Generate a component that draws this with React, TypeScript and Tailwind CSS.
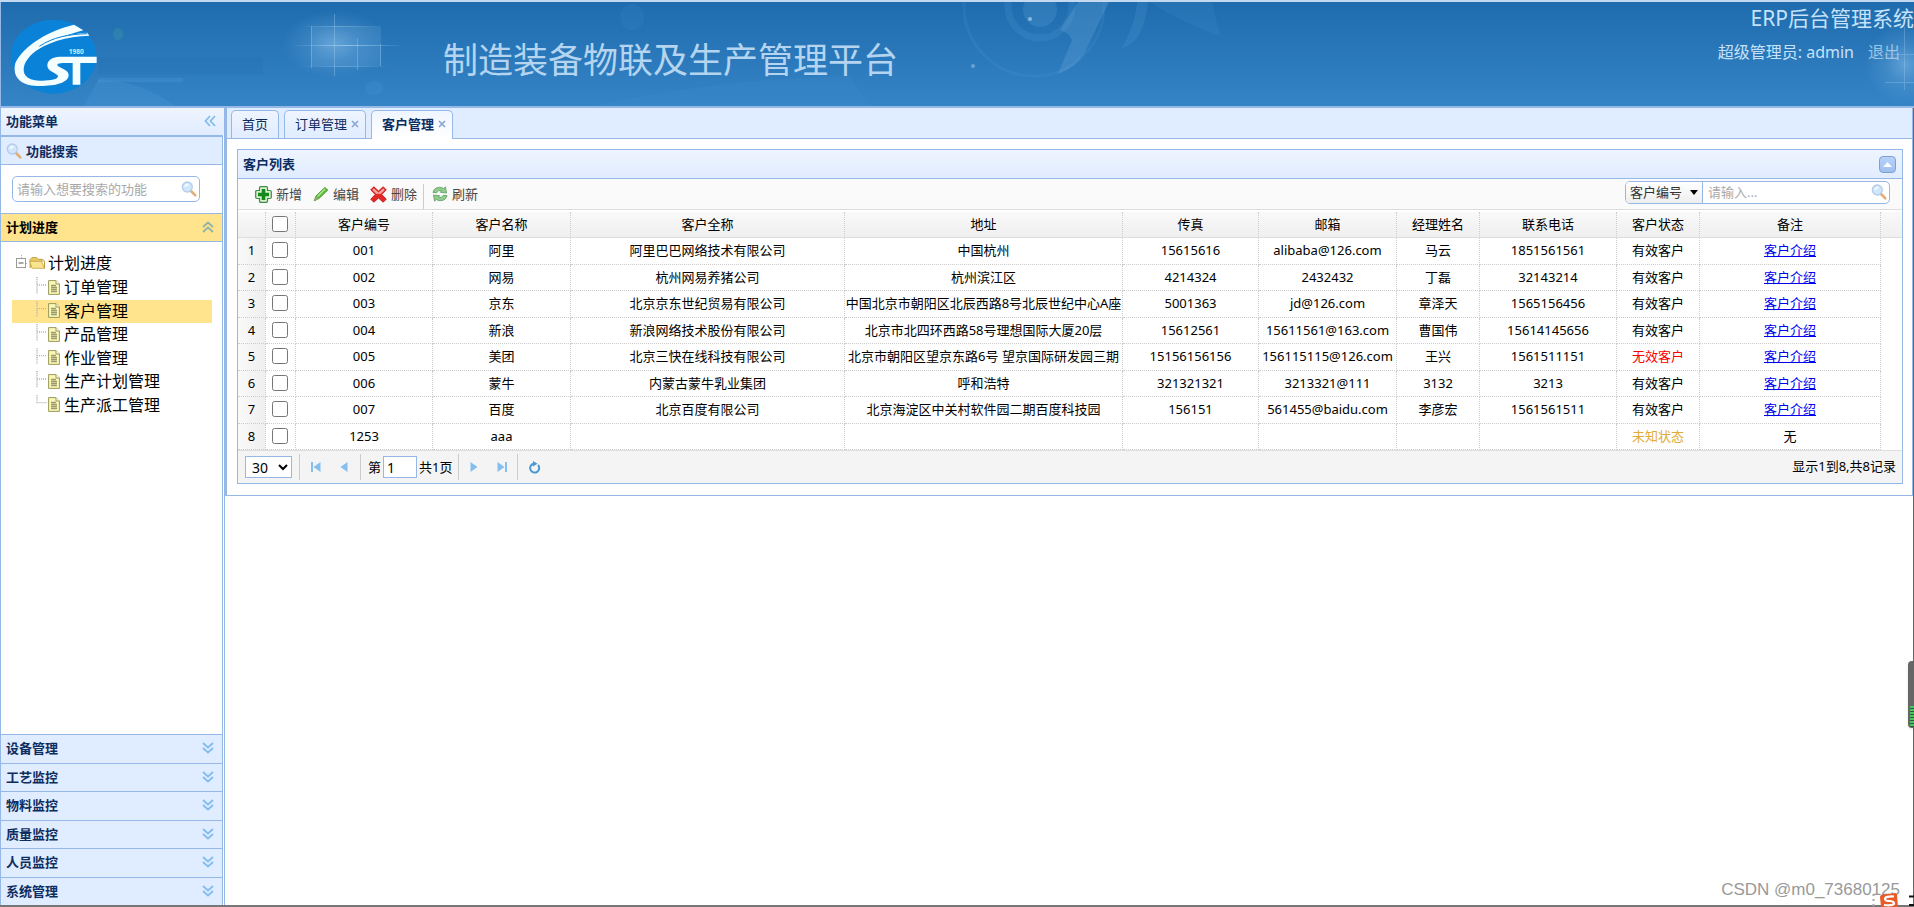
import { Fragment, type ReactNode } from 'react'

type Customer = {
  code: string
  name: string
  fullName: string
  address: string
  fax: string
  email: string
  manager: string
  phone: string
  status: 'valid' | 'invalid' | 'unknown'
  hasIntro: boolean
}

const customers: Customer[] = [
  { code: '001', name: '阿里', fullName: '阿里巴巴网络技术有限公司', address: '中国杭州', fax: '15615616', email: 'alibaba@126.com', manager: '马云', phone: '1851561561', status: 'valid', hasIntro: true },
  { code: '002', name: '网易', fullName: '杭州网易养猪公司', address: '杭州滨江区', fax: '4214324', email: '2432432', manager: '丁磊', phone: '32143214', status: 'valid', hasIntro: true },
  { code: '003', name: '京东', fullName: '北京京东世纪贸易有限公司', address: '中国北京市朝阳区北辰西路8号北辰世纪中心A座', fax: '5001363', email: 'jd@126.com', manager: '章泽天', phone: '1565156456', status: 'valid', hasIntro: true },
  { code: '004', name: '新浪', fullName: '新浪网络技术股份有限公司', address: '北京市北四环西路58号理想国际大厦20层', fax: '15612561', email: '15611561@163.com', manager: '曹国伟', phone: '15614145656', status: 'valid', hasIntro: true },
  { code: '005', name: '美团', fullName: '北京三快在线科技有限公司', address: '北京市朝阳区望京东路6号 望京国际研发园三期', fax: '15156156156', email: '156115115@126.com', manager: '王兴', phone: '1561511151', status: 'invalid', hasIntro: true },
  { code: '006', name: '蒙牛', fullName: '内蒙古蒙牛乳业集团', address: '呼和浩特', fax: '321321321', email: '3213321@111', manager: '3132', phone: '3213', status: 'valid', hasIntro: true },
  { code: '007', name: '百度', fullName: '北京百度有限公司', address: '北京海淀区中关村软件园二期百度科技园', fax: '156151', email: '561455@baidu.com', manager: '李彦宏', phone: '1561561511', status: 'valid', hasIntro: true },
  { code: '1253', name: 'aaa', fullName: '', address: '', fax: '', email: '', manager: '', phone: '', status: 'unknown', hasIntro: false },
]

const statusLabels = {
  valid: { text: '有效客户', color: 'text-black' },
  invalid: { text: '无效客户', color: 'text-[#f00]' },
  unknown: { text: '未知状态', color: 'text-[#e0ac38]' },
}

const columns = [
  { title: '客户编号', width: 'w-[137px]' },
  { title: '客户名称', width: 'w-[138px]' },
  { title: '客户全称', width: 'w-[274px]' },
  { title: '地址', width: 'w-[278px]' },
  { title: '传真', width: 'w-[136px]' },
  { title: '邮箱', width: 'w-[138px]' },
  { title: '经理姓名', width: 'w-[83px]' },
  { title: '联系电话', width: 'w-[137px]' },
  { title: '客户状态', width: 'w-[83px]' },
  { title: '备注', width: 'w-[181px]' },
]

const treeItems = ['订单管理', '客户管理', '产品管理', '作业管理', '生产计划管理', '生产派工管理']
const closedMenus = ['设备管理', '工艺监控', '物料监控', '质量监控', '人员监控', '系统管理']

function Logo() {
  return (
    <svg className="h-[76px] w-[88px]" viewBox="30 58 264 228" aria-label="GST" role="img">
      <ellipse cx="161" cy="171" rx="129" ry="111" fill="#0a82d8" />
      <path d="M222 75C150 92 72 135 46 190C36 232 62 258 112 259C168 260 206 248 206 226C206 208 172 204 172 196C172 190 184 190 218 190V255H241V190H290V171H180C152 172 142 184 142 198C142 216 174 220 174 230C174 240 148 244 118 243C78 242 64 222 74 194C94 150 160 116 250 92Z" fill="#f4feff" />
      <path d="M92 164C130 124 190 104 262 99L268 108C200 110 138 128 92 164Z" fill="#f4feff" />
      <path d="M118 140C160 112 205 104 262 102" fill="none" stroke="#0a82d8" strokeWidth="3" />
      <text x="206" y="164" fontSize="20" fontWeight="700" fill="#c9ecff">1980</text>
    </svg>
  )
}

function HeaderArt() {
  return (
    <svg className="absolute inset-0 size-full" viewBox="0 0 1914 104" preserveAspectRatio="xMinYMin slice" aria-hidden="true">
      <defs>
        <radialGradient id="glow">
          <stop offset="0" stopColor="#9fd0f5" stopOpacity=".45" />
          <stop offset=".5" stopColor="#9fd0f5" stopOpacity=".15" />
          <stop offset="1" stopColor="#9fd0f5" stopOpacity="0" />
        </radialGradient>
        <linearGradient id="fade">
          <stop offset="0" stopColor="#a9d4f4" stopOpacity="0" />
          <stop offset=".5" stopColor="#a9d4f4" stopOpacity=".7" />
          <stop offset="1" stopColor="#a9d4f4" stopOpacity="0" />
        </linearGradient>
      </defs>
      <ellipse cx="334" cy="42" rx="52" ry="34" fill="url(#glow)" />
      <path d="M311 24H381V64H311Z" fill="#8fc4ee" opacity=".14" />
      <rect x="290" y="43" width="115" height="1" fill="url(#fade)" />
      <rect x="300" y="24" width="80" height="1" fill="url(#fade)" opacity=".5" />
      <rect x="300" y="64" width="90" height="1" fill="url(#fade)" opacity=".6" />
      <path d="M334.500 12V74M311.500 24V66M357.500 36V68M380.500 42V64" stroke="#a9d4f4" opacity=".35" />
      <path d="M98 55H263V73H98Z" fill="#1b62a5" opacity=".14" />
      <path d="M98 76H183V80H98Z" fill="#6fb4e6" opacity=".16" />
      <ellipse cx="118" cy="32" rx="5" ry="6" fill="#3d9aa0" opacity=".35" />
      <path d="M98 78Q140 78 175 104H84Z" fill="#6fb4e6" opacity=".14" />
      <ellipse cx="374" cy="86" rx="9" ry="7" fill="#4ca0dc" opacity=".2" />
      <path d="M590 104Q720 76 850 74L870 104Z" fill="#4c9fd8" opacity=".1" />
      <ellipse cx="632" cy="15" rx="12" ry="13" fill="#5aa6df" opacity=".1" />
      <circle cx="1034" cy="4" r="70" fill="none" stroke="#5ba5dc" strokeWidth="3" opacity=".14" />
      <circle cx="1040" cy="4" r="32" fill="none" stroke="#6db0e2" strokeWidth="7" opacity=".14" />
      <circle cx="1040" cy="8" r="17" fill="#6db0e2" opacity=".2" />
      <path d="M1078 0H1109L1085 50Q1076 66 1058 72L1072 38Q1068 30 1060 28Z" fill="#79b3e0" opacity=".24" />
      <path d="M1137 0H1148Q1144 40 1122 46Q1136 20 1137 0Z" fill="#79b3e0" opacity=".14" />
      <path d="M1150 0H1212L1220 34Q1180 20 1150 0Z" fill="#5ba5dc" opacity=".12" />
      <circle cx="1030" cy="17" r="2" fill="#bfe0f7" opacity=".6" />
      <circle cx="973" cy="64" r="2" fill="#bfe0f7" opacity=".4" />
      <ellipse cx="1905" cy="62" rx="40" ry="40" fill="url(#glow)" />
      <path d="M1904.500 25V88M1885 52.500H1914M1885 80.500H1914" stroke="#a9d4f4" opacity=".3" />
    </svg>
  )
}

function SearchIcon() {
  return (
    <svg className="size-4 shrink-0" viewBox="0 0 16 16" aria-hidden="true">
      <path d="M10 10L14.300 14.300" stroke="#e3ad78" strokeWidth="2.600" strokeLinecap="round" />
      <circle cx="6.300" cy="6" r="5" fill="#cfe6fb" stroke="#b4cce8" strokeWidth="1.300" />
      <path d="M3 6A3.500 3.500 0 0 1 8 3Q7 6 3 6Z" fill="#f2f9ff" />
    </svg>
  )
}

function DoubleChevron({ direction }: { direction: 'left' | 'up' | 'down' }) {
  const paths = {
    left: 'M8 3L3.500 8L8 13M13 3L8.500 8L13 13',
    up: 'M3 8L8 3.500L13 8M3 13L8 8.500L13 13',
    down: 'M3 3L8 7.500L13 3M3 8L8 12.500L13 8',
  }
  return (
    <svg className="size-4 shrink-0" viewBox="0 0 16 16" fill="none" strokeWidth="1.800" aria-hidden="true">
      <path d={paths[direction]} stroke={direction === 'up' ? '#8fb5a8' : '#82bdee'} />
    </svg>
  )
}

function AddIcon() {
  return (
    <svg className="size-[17px]" viewBox="0 0 17 17" aria-hidden="true">
      <path d="M5.500 .7H11.500Q12.500 .7 12.500 2V4.500H15Q16.300 4.500 16.300 5.700V11.300Q16.300 12.500 15 12.500H12.500V15Q12.500 16.300 11.300 16.300H5.700Q4.500 16.300 4.500 15V12.500H2Q.7 12.500 .7 11.300V5.700Q.7 4.500 2 4.500H4.500V2Q4.500 .7 5.500 .7Z" fill="#d8f0d0" stroke="#3c8a45" strokeWidth="1.200" />
      <path d="M6.700 3H10.300V6.700H14V10.300H10.300V14H6.700V10.300H3V6.700H6.700Z" fill="#148a1c" />
    </svg>
  )
}

function EditIcon() {
  return (
    <svg className="size-4" viewBox="0 0 16 16" aria-hidden="true">
      <path d="M11.800 1.500L14.800 4L6 12.500L1.200 14.800L3 10Z" fill="#5fbb3c" stroke="#3f9a2c" strokeWidth=".9" strokeLinejoin="round" />
      <path d="M12 3L4.500 10.500" stroke="#b4ea94" strokeWidth="1.200" />
      <path d="M3 10.500L5.500 12.700L1.200 14.800Z" fill="#a6a678" />
    </svg>
  )
}

function DeleteIcon() {
  return (
    <svg className="size-[17px]" viewBox="0 0 17 17" aria-hidden="true">
      <path d="M3.800 .8L8.500 5L13.200 .8L16.200 3.800L11.800 8.500L16.200 13.200L13.200 16.200L8.500 12L3.800 16.200L.8 13.200L5.200 8.500L.8 3.800Z" fill="#e32626" stroke="#c01f1f" strokeLinejoin="round" />
      <path d="M3.800 2.300L8.500 6.400L13.200 2.300L14.800 3.900L10.500 8Q8.500 7.300 6.500 8L2.200 3.900Z" fill="#f5a3a0" />
    </svg>
  )
}

function ReloadIcon() {
  return (
    <svg className="size-4" viewBox="0 0 16 16" aria-hidden="true">
      <g fill="#8fcb8b" stroke="#5a9a62" strokeWidth=".8" strokeLinejoin="round">
        <path d="M1 6.500Q2 1.500 7.500 1.300Q10 1.300 11.500 2.500L13.500 .9L14.500 7L8.300 6.300L9.700 4.700Q6.500 3.500 4.800 6.700Z" />
        <path d="M15 9.500Q14 14.500 8.500 14.700Q6 14.700 4.500 13.500L2.500 15.100L1.500 9L7.700 9.700L6.300 11.300Q9.500 12.500 11.200 9.300Z" />
      </g>
    </svg>
  )
}

function FolderIcon() {
  return (
    <svg className="size-4 shrink-0" viewBox="0 0 16 16" aria-hidden="true">
      <path d="M1 13V4.500L3 2.500H7.500L9 4.200H13V7" fill="#e9c95c" stroke="#b9974a" strokeWidth=".8" />
      <path d="M.6 6.300H12.500L15.400 13.300H3.200Z" fill="#fbe58c" stroke="#c3a04c" strokeWidth=".8" strokeLinejoin="round" />
      <path d="M13 4.500Q15.500 5 15.500 7V13.300" fill="none" stroke="#c79a40" />
    </svg>
  )
}

function FileIcon() {
  return (
    <svg className="h-[15px] w-3 shrink-0" viewBox="0 0 12 15" aria-hidden="true">
      <path d="M.6 .6H8L11.400 4V14.400H.6Z" fill="#fbf7b4" stroke="#9a9a5c" />
      <path d="M8 .6V4H11.400" fill="#fff" stroke="#9a9a5c" />
      <path d="M3 5.500H8M3 7.500H9M3 9.500H9M3 11.500H9" stroke="#9c9a70" strokeWidth="1.400" />
    </svg>
  )
}

function TreeLines({ last }: { last: boolean }) {
  return (
    <svg className="h-full w-[12px] shrink-0" viewBox="0 0 12 23" preserveAspectRatio="none" aria-hidden="true">
      <path d={last ? 'M1 1V9.500H11' : 'M1 1V18M1 9.500H11'} fill="none" stroke="#b4b4b4" strokeDasharray="1 1" strokeWidth="1.500" />
    </svg>
  )
}

function Tab({ title, active, closable }: { title: string; active?: boolean; closable?: boolean }) {
  return (
    <div
      className={
        active
          ? '-mb-px flex h-[29px] items-center rounded-t-[5px] border border-b-0 border-[#95b8e7] bg-linear-to-b from-[#eff5ff] to-white px-[10px] pb-[3px] font-bold'
          : 'flex h-7 items-center rounded-t-[5px] border border-b-0 border-[#95b8e7] bg-linear-to-b from-[#eff5ff] to-[#e0ecff] px-[10px] pb-[2px]'
      }
    >
      <button role="tab" aria-selected={!!active} className="leading-5 whitespace-nowrap">{title}</button>
      {closable && (
        <button aria-label={`关闭${title}`} className="ml-1 -mr-1">
          <svg className="size-2" viewBox="0 0 8 8" aria-hidden="true"><path d="M1 1L7 7M7 1L1 7" stroke="#8aa6d4" strokeWidth="1.700" /></svg>
        </button>
      )}
    </div>
  )
}

function ToolButton({ icon, label }: { icon: ReactNode; label: string }) {
  return (
    <button className="flex items-center gap-1 text-[#444]">
      {icon}
      {label}
    </button>
  )
}

function PagerButton({ label, path }: { label: string; path: string }) {
  return (
    <button aria-label={label} className="flex size-7 items-center justify-center">
      <svg className="size-3" viewBox="0 0 12 12" fill="#84bff0" aria-hidden="true"><path d={path} /></svg>
    </button>
  )
}

function Sidebar() {
  return (
    <aside className="flex w-[225px] shrink-0 flex-col border-x border-[#95b8e7] font-bold text-[#0e2d5f]">
      <div className="flex h-[27px] shrink-0 items-center justify-between bg-linear-to-b from-[#eff5ff] to-[#e0ecff] pr-[6px] pb-[2px] pl-[5px]">
        <h2>功能菜单</h2>
        <button aria-label="收起菜单"><DoubleChevron direction="left" /></button>
      </div>
      <div className="mr-px flex min-h-0 flex-1 flex-col border-t-2 border-r border-[#95b8e7]">
        <h3 className="flex h-7 shrink-0 items-center gap-1 border-b border-[#95b8e7] bg-[#e0ecff] pl-[5px]">
          <SearchIcon />
          功能搜索
        </h3>
        <div className="shrink-0 px-[11px] py-[11px] font-normal">
          <div className="flex h-[26px] w-[188px] items-center rounded-[5px] border border-[#95b8e7] bg-white pr-[2px]">
            <input aria-label="功能搜索" placeholder="请输入想要搜索的功能" className="min-w-0 flex-1 px-1 outline-none placeholder:text-[#a9a9a9]" />
            <button aria-label="搜索"><SearchIcon /></button>
          </div>
        </div>
        <button className="flex h-[29px] shrink-0 items-center justify-between border-y border-[#95b8e7] bg-[#ffe48d] pr-[6px] pb-[2px] pl-[5px] text-black">
          计划进度
          <DoubleChevron direction="up" />
        </button>
        <div className="min-h-0 flex-1 overflow-hidden px-[11px] pt-[10px] text-base leading-[22px] font-normal text-black">
          <div className="flex h-6 items-center pb-[2px]">
            <button aria-label="折叠" className="ml-1 flex h-4 w-[13px] items-start">
              <svg className="h-[14px] w-3" viewBox="0 0 12 14" aria-hidden="true">
                <path d="M5.500 0V3M10 8.500H12" stroke="#b4b4b4" strokeDasharray="1 1" />
                <rect x=".5" y="3.500" width="9" height="9" fill="#fff" stroke="#9a9a9a" />
                <path d="M2.500 8H7.500" stroke="#555" />
              </svg>
            </button>
            <FolderIcon />
            <span className="ml-[3px]">计划进度</span>
          </div>
          <ul>
            {treeItems.map((item, i) => (
              <li
                key={item}
                className={
                  item === '客户管理'
                    ? 'flex h-[23px] w-[200px] items-center bg-[#ffe48d] pb-[2px] pl-6'
                    : 'flex items-center pb-[2px] pl-6 odd:h-6 even:h-[23px]'
                }
              >
                <TreeLines last={i === treeItems.length - 1} />
                <FileIcon />
                <a href="#" className="ml-1">{item}</a>
              </li>
            ))}
          </ul>
        </div>
        {closedMenus.map((menu) => (
          <button key={menu} className="flex shrink-0 items-center justify-between border-t border-[#95b8e7] bg-[#e0ecff] pr-[6px] pb-[2px] pl-[5px] odd:h-[29px] even:h-7">
            {menu}
            <DoubleChevron direction="down" />
          </button>
        ))}
      </div>
    </aside>
  )
}

function CustomerTable() {
  return (
    <table className="mt-[2px] w-full table-fixed border-separate border-spacing-0 text-center text-black">
      <colgroup>
        <col className="w-7" />
        <col className="w-[30px]" />
        {columns.map((c) => <col key={c.title} className={c.width} />)}
        <col className="w-[21px]" />
      </colgroup>
      <thead>
        <tr className="h-[26px] bg-linear-to-b from-[#f9f9f9] to-[#efefef] *:border-b *:border-b-[#ddd] *:px-0 *:pt-0 *:pb-[2px] *:font-normal">
          <th aria-label="序号" className="border-r border-r-[#ccc] [border-right-style:dotted]"></th>
          <th className="border-r border-r-[#ccc] [border-right-style:dotted]">
            <input type="checkbox" aria-label="全选" className="ml-[6px] block size-4" />
          </th>
          {columns.map((c) => (
            <th key={c.title} scope="col" className="border-r border-r-[#ccc] [border-right-style:dotted]">{c.title}</th>
          ))}
          <td></td>
        </tr>
      </thead>
      <tbody>
        {customers.map((c, i) => (
          <tr key={c.code} className="*:px-0 *:pt-0 *:pb-[2px] odd:h-[27px] even:h-[26px]">
            <td className="border-r border-b border-dotted border-[#ccc] bg-linear-to-r from-[#f9f9f9] to-[#efefef]">{i + 1}</td>
            <td className="border-r border-b border-dotted border-[#ccc]">
              <input type="checkbox" aria-label={`选择${c.name}`} className="ml-[6px] block size-4" />
            </td>
            {[c.code, c.name, c.fullName, c.address, c.fax, c.email, c.manager, c.phone].map((value, j) => (
              <td key={j} className="overflow-hidden border-r border-b border-dotted border-[#ccc] whitespace-nowrap">{value}</td>
            ))}
            <td className={`border-r border-b border-dotted border-[#ccc] ${statusLabels[c.status].color}`}>{statusLabels[c.status].text}</td>
            <td className="border-r border-b border-dotted border-[#ccc]">
              {c.hasIntro ? <a href="#" className="text-[#00e] underline">客户介绍</a> : '无'}
            </td>
            <td></td>
          </tr>
        ))}
      </tbody>
    </table>
  )
}

function Pager() {
  const separator = <span className="h-[26px] w-px bg-[#ccc]" />
  return (
    <div className="flex h-[33px] items-center border-t border-[#ddd] bg-[#f4f4f4] text-black">
      <select aria-label="每页条数" className="mr-[7px] ml-[7px] h-[22px] w-[47px] border border-[#95b8e7] bg-white pl-[2px] text-sm">
        <option>30</option>
      </select>
      {separator}
      <div className="flex px-[2px]">
        <PagerButton label="第一页" path="M1 1H3V11H1ZM10.500 1V11L3.500 6Z" />
        <PagerButton label="上一页" path="M9.500 1V11L2.500 6Z" />
      </div>
      {separator}
      <label className="flex items-center pr-[6px] pl-[7px]">
        第
        <input defaultValue="1" className="mx-[2px] h-[22px] w-[34px] border border-[#95b8e7] bg-white px-[3px] text-sm outline-none" />
        共1页
      </label>
      {separator}
      <div className="flex px-px">
        <PagerButton label="下一页" path="M2.500 1V11L9.500 6Z" />
        <PagerButton label="最后一页" path="M9 1H11V11H9ZM1.500 1V11L8.500 6Z" />
      </div>
      {separator}
      <button aria-label="刷新" className="ml-[10px]">
        <svg className="size-[13px]" viewBox="0 0 13 13" fill="none" aria-hidden="true">
          <path d="M10 4A4.500 4.500 0 1 1 5.500 2.700" stroke="#4a98d2" strokeWidth="2" />
          <path d="M5 0L9.500 2.700L5 5.400Z" fill="#4a98d2" />
        </svg>
      </button>
      <span className="mr-[6px] ml-auto pb-[2px]">显示1到8,共8记录</span>
    </div>
  )
}

export default function App() {
  return (
    <div className="relative flex h-screen flex-col overflow-hidden bg-white font-['Noto_Sans','Noto_Sans_CJK_SC',sans-serif] text-[13px] leading-[18px]">
      <header className="relative flex h-[108px] shrink-0 border-y-2 border-t-[#c4d8f0] border-b-[#95b8e7] bg-linear-to-b from-[#1e6cae] to-[#3584c6]">
        <HeaderArt />
        <div className="relative flex w-full items-start border-l border-[#95b8e7]">
          <div className="pt-[17px] pl-[9px]"><Logo /></div>
          <h1 className="mt-[35px] ml-[345px] text-[35px] leading-[46px] whitespace-nowrap text-[#b4d4ef]">制造装备物联及生产管理平台</h1>
          <div className="ml-auto text-right whitespace-nowrap text-[#c5e2fa]">
            <div className="text-[21px] leading-8">ERP后台管理系统</div>
            <div className="mr-[14px] text-base leading-9">
              超级管理员: admin
              <a href="#" className="ml-[14px] text-[#9bc4e6]">退出</a>
            </div>
          </div>
        </div>
      </header>

      <div className="flex min-h-0 flex-1">
        <Sidebar />
        <main className="flex min-w-0 flex-1 flex-col border-r border-[#666]">
          <div className="border-x border-b border-l-2 border-[#95b8e7]">
            <div role="tablist" className="flex h-[31px] items-end gap-[5px] border-b border-[#95b8e7] bg-[#e0ecff] pl-1 text-[#0e2d5f]">
              <Tab title="首页" />
              <Tab title="订单管理" closable />
              <Tab title="客户管理" closable active />
            </div>
            <div className="p-[10px] pr-[9px] pb-[11px]">
              <section className="border border-[#95b8e7]">
                <div className="flex h-[29px] items-center justify-between border-b border-[#95b8e7] bg-linear-to-b from-[#eff5ff] to-[#e0ecff] pr-[6px] pl-[5px]">
                  <h2 className="font-bold text-[#0e2d5f]">客户列表</h2>
                  <button aria-label="折叠面板" className="flex size-[17px] items-center justify-center rounded-[4px] border border-[#7f9fd0] bg-linear-to-b from-[#b9d3fa] to-[#9dbff0]">
                    <svg className="h-[5px] w-[9px]" viewBox="0 0 9 5" aria-hidden="true"><path d="M0 5L4.500 0L9 5Z" fill="#fff" /></svg>
                  </button>
                </div>
                <div className="flex h-[31px] items-center border-b border-[#ddd] bg-[#fafafa] pr-3 pl-[17px]">
                  <div className="flex items-center gap-[11px]">
                    <ToolButton icon={<AddIcon />} label="新增" />
                    <ToolButton icon={<EditIcon />} label="编辑" />
                    <ToolButton icon={<DeleteIcon />} label="删除" />
                  </div>
                  <span className="mr-2 ml-[6px] h-[25px] w-px self-end bg-[#ccc]" />
                  <ToolButton icon={<ReloadIcon />} label="刷新" />
                  <div className="mb-1 ml-auto flex h-[23px] w-[265px] items-center overflow-hidden rounded-[5px] border border-[#95b8e7] bg-white pr-[2px]">
                    <button className="flex h-full items-center gap-2 border-r border-[#95b8e7] bg-linear-to-b from-white to-[#eee] pr-1 pl-1 text-[#333]">
                      客户编号
                      <svg className="h-[5px] w-2" viewBox="0 0 8 5" aria-hidden="true"><path d="M0 0H8L4 5Z" /></svg>
                    </button>
                    <input aria-label="查询内容" placeholder="请输入..." className="min-w-0 flex-1 px-[5px] outline-none placeholder:text-[#a9a9a9]" />
                    <button aria-label="查询"><SearchIcon /></button>
                  </div>
                </div>
                <CustomerTable />
                <Pager />
              </section>
            </div>
          </div>
        </main>
      </div>
      <div className="h-[2px] shrink-0 bg-[#777]" />

      {/* floating desktop widgets */}
      <Fragment>
        <div className="absolute top-[661px] right-0 flex h-[67px] w-[6px] flex-col justify-end rounded-l-[4px] bg-[#666] pl-[2px] shadow">
          <div className="mb-px h-[21px] bg-[repeating-linear-gradient(#4cc564_0_2px,#2d5a37_2px_3px)]" />
        </div>
        <div className="absolute right-[14px] bottom-[5px] font-['Liberation_Sans',sans-serif] text-[17px] leading-6 text-[#999]">CSDN @m0_73680125</div>
        <svg className="absolute right-0 bottom-0 h-[14px] w-[42px]" viewBox="0 0 42 14" aria-hidden="true">
          <path d="M1.500 1V14" stroke="#aaa" strokeDasharray="2 3" strokeWidth="2" />
          <path d="M8 4Q8 2 10 1.700L23 0Q25 0 25 2L26 14H9Z" fill="#ea5a26" />
          <path d="M22 3.500Q13 3 13 6Q13 8 18 8Q22.500 8.500 22 11Q20 13 12 12" fill="none" stroke="#fff" strokeWidth="2.200" />
          <path d="M37 3.500H42M37 12H42" stroke="#111" strokeWidth="2" />
        </svg>
      </Fragment>
    </div>
  )
}
